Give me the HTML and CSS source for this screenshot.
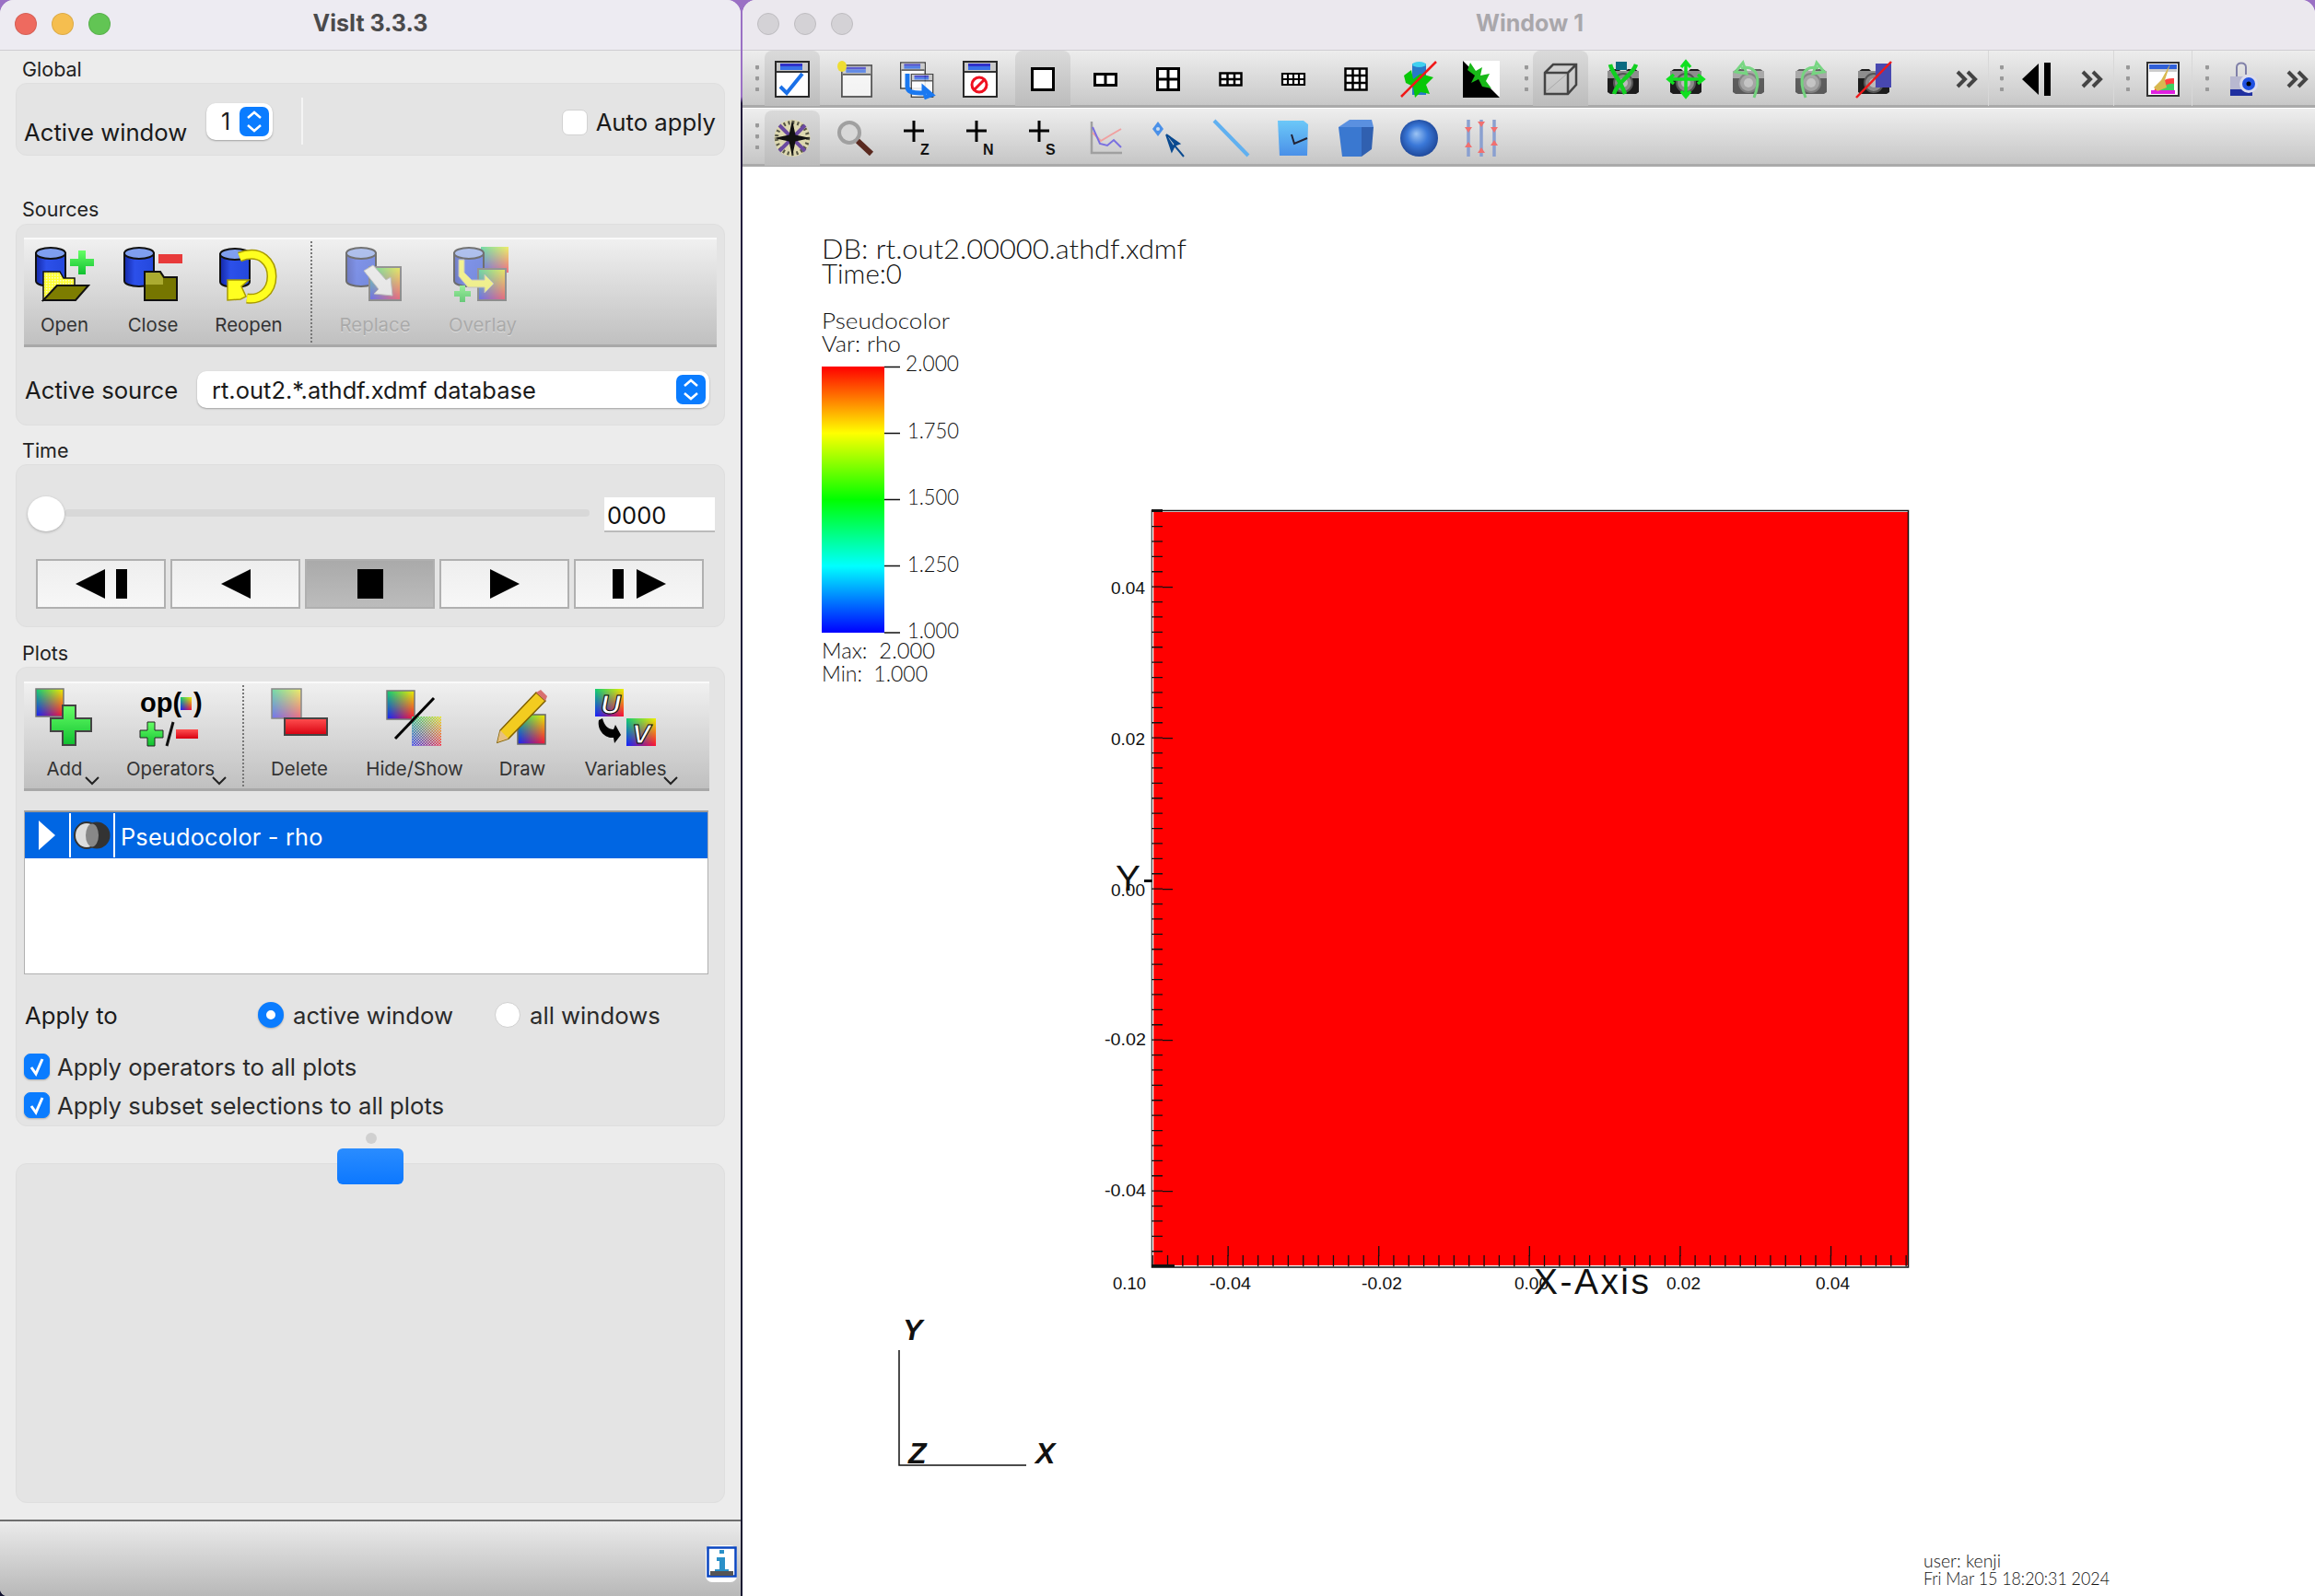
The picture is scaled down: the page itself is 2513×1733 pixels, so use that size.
FILE: index.html
```html
<!DOCTYPE html>
<html lang="en">
<head>
<meta charset="utf-8">
<title>VisIt 3.3.3</title>
<link rel="stylesheet" href="styles.css">
</head>
<body>
<svg class="defs" aria-hidden="true">
  <defs>
    <linearGradient id="cylg" x1="0" x2="1" y1="0" y2="0"><stop offset="0" stop-color="#1428a8"/><stop offset=".35" stop-color="#2c50ea"/><stop offset="1" stop-color="#2448dc"/></linearGradient>
    <linearGradient id="rbV1" x1="0" x2="0" y1="0" y2="1"><stop offset="0" stop-color="#10d070"/><stop offset="1" stop-color="#1420ff"/></linearGradient>
    <linearGradient id="rbV2" x1="0" x2="0" y1="0" y2="1"><stop offset="0" stop-color="#f0f000"/><stop offset="1" stop-color="#ff1030"/></linearGradient>
    <linearGradient id="maskG" x1="0" x2="1" y1="0" y2="0"><stop offset="0" stop-color="#000"/><stop offset="1" stop-color="#fff"/></linearGradient>
    <mask id="hm" maskContentUnits="objectBoundingBox"><rect width="1" height="1" fill="url(#maskG)"/></mask>
    <linearGradient id="grn" x1="0" x2="0" y1="0" y2="1"><stop offset="0" stop-color="#66ff66"/><stop offset="1" stop-color="#10c030"/></linearGradient>
    <linearGradient id="redg" x1="0" x2="0" y1="0" y2="1"><stop offset="0" stop-color="#ff5050"/><stop offset="1" stop-color="#d80010"/></linearGradient>
    <linearGradient id="ramp" x1="0" x2="0" y1="0" y2="1"><stop offset="0" stop-color="#f00"/><stop offset=".25" stop-color="#ff0"/><stop offset=".5" stop-color="#0f0"/><stop offset=".75" stop-color="#0ff"/><stop offset="1" stop-color="#00f"/></linearGradient>
    <linearGradient id="planeg" x1="0" x2="0" y1="0" y2="1"><stop offset="0" stop-color="#6cc8f8"/><stop offset="1" stop-color="#4a90e8"/></linearGradient>
    <radialGradient id="sph" cx=".5" cy=".5" r=".6" fx=".42" fy=".38"><stop offset="0" stop-color="#9cc4f4"/><stop offset=".45" stop-color="#3a78d8"/><stop offset="1" stop-color="#173a88"/></radialGradient>
    <pattern id="ychk" width="3" height="3" patternUnits="userSpaceOnUse"><rect width="3" height="3" fill="#ffff30"/><rect width="1.5" height="1.5" fill="#f8f8d0"/></pattern>
    <pattern id="cchk" width="3" height="3" patternUnits="userSpaceOnUse"><rect width="1.5" height="1.5" fill="#cfcfcf"/><rect x="1.5" y="1.5" width="1.5" height="1.5" fill="#cfcfcf"/></pattern>
    <symbol id="rb" viewBox="0 0 10 10" preserveAspectRatio="none"><rect width="10" height="10" fill="url(#rbV1)"/><rect width="10" height="10" fill="url(#rbV2)" mask="url(#hm)"/></symbol>
    <symbol id="cyl" viewBox="0 0 34 44"><path d="M1 7v30c0 3.5 7 6 16 6s16-2.5 16-6V7z" fill="url(#cylg)" stroke="#111" stroke-width="2"/><ellipse cx="17" cy="7" rx="16" ry="6" fill="#7f9ff0" stroke="#111" stroke-width="2"/></symbol>
    <symbol id="win" viewBox="0 0 38 40"><rect x="1" y="1" width="36" height="38" fill="#fff" stroke="#2a2a2a" stroke-width="2"/><rect x="2" y="2" width="34" height="10" fill="#c8c8c8"/><rect x="6" y="3" width="24" height="3" fill="#3030c8"/><rect x="6" y="6" width="24" height="4" fill="#3a70e8"/><rect x="2" y="11" width="34" height="2" fill="#333"/></symbol>
    <symbol id="cam" viewBox="0 0 40 40"><path d="M3 12l4-3h8l2 2h6l2-2h8l4 3v22l-3 2H6l-3-2z" fill="#1c1c1c"/><rect x="3" y="11" width="34" height="8" fill="#8e8e8e"/><circle cx="20" cy="24" r="10" fill="#8a8a8a" stroke="#555" stroke-width="2"/><circle cx="20" cy="24" r="5" fill="#bbb"/></symbol>
    <symbol id="chev" viewBox="0 0 27 20"><path d="M3 2l8 8-8 8M14 2l8 8-8 8" fill="none" stroke="#444" stroke-width="4"/></symbol>
    <symbol id="down" viewBox="0 0 16 10"><path d="M1 1l7 7 7-7" fill="none" stroke="#222" stroke-width="2"/></symbol>
    <symbol id="updown" viewBox="0 0 32 32"><rect width="32" height="32" rx="7" fill="#0a7cff"/><path d="M9 12l7-6 7 6M9 20l7 6 7-6" fill="none" stroke="#fff" stroke-width="2.5"/></symbol>
  </defs>
</svg>

<div class="desktop">
  <section class="panel">
    <header class="titlebar main-title">
      <div class="lights"><i class="light red"></i><i class="light yellow"></i><i class="light green"></i></div>
      <span class="title-text">VisIt 3.3.3</span>
    </header>
    <div class="panel-body">
      <div class="sec first">Global</div>
      <div class="group group-global">
        <span class="lbl active-label">Active window</span>
        <span class="combo small"><span class="combo-val">1</span><svg class="updown"><use href="#updown"/></svg></span>
        <i class="vsep"></i>
        <label class="auto"><i class="check-box"></i><span class="lbl">Auto apply</span></label>
      </div>

      <div class="sec sources">Sources</div>
      <div class="group group-sources">
        <div class="iconbar">
          <div class="tool w88">
            <svg class="ti" width="64" height="60" viewBox="0 0 64 60"><use href="#cyl" width="34" height="44"/><path d="M9 27h18l4 7h12v8H24L9 58z" fill="url(#ychk)" stroke="#111" stroke-width="1.5"/><path d="M9 58l15-16h34L44 58z" fill="#7d7d00" stroke="#111" stroke-width="2"/><path d="M47 4h8v9h9v8h-9v9h-8v-9h-9v-8h9z" fill="url(#grn)"/></svg>
            <span class="tl">Open</span>
          </div>
          <div class="tool w104">
            <svg class="ti" width="64" height="60" viewBox="0 0 64 60"><use href="#cyl" width="34" height="44"/><path d="M23 58V27h17l4 6h14v25z" fill="#767600" stroke="#111" stroke-width="2"/><path d="M24 28h15l4 6v7H24z" fill="#abab30"/><rect x="38" y="8" width="26" height="10" fill="#e83a3a"/></svg>
            <span class="tl">Close</span>
          </div>
          <div class="tool w104">
            <svg class="ti" width="64" height="60" viewBox="0 0 64 60"><use href="#cyl" y="1" width="34" height="44"/><path d="M22 11C46 2 57 18 57 32c0 17-13 26-27 24" fill="none" stroke="#a89a00" stroke-width="11"/><path d="M22 11C46 2 57 18 57 32c0 17-13 26-27 24" fill="none" stroke="#ffff20" stroke-width="8"/><path d="M9 36h23l-8 7 5 11-6 3-14 1z" fill="#ffff20" stroke="#a89a00" stroke-width="1.5"/></svg>
            <span class="tl">Reopen</span>
          </div>
          <i class="dots"></i>
          <div class="tool w138 off">
            <svg class="ti" width="64" height="60" viewBox="0 0 64 60"><use href="#cyl" width="34" height="44"/><use href="#rb" x="26" y="22" width="34" height="36"/><rect x="26" y="22" width="34" height="36" fill="none" stroke="#555" stroke-width="2"/><path d="M20 26l10-6 14 16 5-3 2 20-20-2 5-5z" fill="#f2f2f2" stroke="#aaa"/></svg>
            <span class="tl">Replace</span>
          </div>
          <div class="tool w96 off">
            <svg class="ti" width="64" height="60" viewBox="0 0 64 60"><use href="#rb" x="30" y="0" width="30" height="28"/><use href="#cyl" width="34" height="44"/><use href="#rb" x="27" y="24" width="30" height="34"/><rect x="27" y="24" width="30" height="34" fill="none" stroke="#555" stroke-width="2"/><path d="M12 14v14l8 8h14v-6l10 10-10 10v-6H16L6 32V14z" fill="#ffff50" stroke="#aaa"/><path d="M7 42h6v6h6v6h-6v6H7v-6H1v-6h6z" fill="url(#grn)"/></svg>
            <span class="tl">Overlay</span>
          </div>
        </div>
        <div class="source-row">
          <span class="lbl source-label">Active source</span>
          <span class="combo wide"><span class="combo-text">rt.out2.*.athdf.xdmf database</span><svg class="updown"><use href="#updown"/></svg></span>
        </div>
      </div>

      <div class="sec later">Time</div>
      <div class="group group-time">
        <div class="slider-row">
          <div class="slider"><i class="track"></i><i class="knob"></i></div>
          <span class="num-input">0000</span>
        </div>
        <div class="transport">
          <button class="tbtn"><svg width="56" height="32" viewBox="0 0 56 32"><path d="M32 0v32L0 16z M44 0h12v32H44z"/></svg></button>
          <button class="tbtn"><svg width="32" height="32" viewBox="0 0 32 32"><path d="M32 0v32L0 16z"/></svg></button>
          <button class="tbtn on"><svg width="28" height="32" viewBox="0 0 28 32"><path d="M0 0h28v32H0z"/></svg></button>
          <button class="tbtn"><svg width="32" height="32" viewBox="0 0 32 32"><path d="M0 0v32l32-16z"/></svg></button>
          <button class="tbtn"><svg width="58" height="32" viewBox="0 0 58 32"><path d="M0 0h12v32H0z M26 0v32l32-16z"/></svg></button>
        </div>
      </div>

      <div class="sec later plots-sec">Plots</div>
      <div class="group group-plots">
        <div class="iconbar plotsbar">
          <div class="tool w88">
            <svg class="ti" width="64" height="62" viewBox="0 0 64 62"><use href="#rb" x="1" width="30" height="30"/><rect x="1" y="0" width="30" height="30" fill="none" stroke="#777" stroke-width="1.5"/><path d="M30 18h14v14h17v14H44v15H30V46H17V32h13z" fill="url(#grn)" stroke="#444" stroke-width="2"/></svg>
            <span class="tl">Add</span>
            <svg class="drop"><use href="#down"/></svg>
          </div>
          <div class="tool w142">
            <svg class="ti" width="66" height="62" viewBox="0 0 66 62"><text class="op" x="0" y="25">op(</text><use href="#rb" x="44" y="9" width="12" height="14"/><text class="op" x="58" y="25">)</text><path d="M8 36h8v9h9v8h-9v9H8v-9H0v-8h8z" fill="url(#grn)" stroke="#222"/><path d="M36 36l-7 26" stroke="#111" stroke-width="3"/><rect x="39" y="44" width="24" height="10" fill="url(#redg)"/></svg>
            <span class="tl">Operators</span>
            <svg class="drop"><use href="#down"/></svg>
          </div>
          <i class="dots plot-dots"></i>
          <div class="tool w122">
            <svg class="ti" width="62" height="62" viewBox="0 0 62 62"><g opacity=".55"><use href="#rb" x="1" width="32" height="32"/></g><rect x="1" y="0" width="32" height="32" fill="none" stroke="#888" stroke-width="1.5"/><rect x="15" y="32" width="46" height="18" fill="url(#redg)" stroke="#444" stroke-width="2"/></svg>
            <span class="tl">Delete</span>
          </div>
          <div class="tool w128">
            <svg class="ti" width="62" height="62" viewBox="0 0 62 62"><use href="#rb" x="1" y="2" width="30" height="31"/><rect x="1" y="2" width="30" height="31" fill="none" stroke="#777" stroke-width="1.5"/><use href="#rb" x="28" y="30" width="32" height="32"/><rect x="28" y="30" width="32" height="32" fill="url(#cchk)"/><path d="M10 54L52 10" stroke="#000" stroke-width="3"/></svg>
            <span class="tl">Hide/Show</span>
          </div>
          <div class="tool w106">
            <svg class="ti" width="58" height="62" viewBox="0 0 58 62"><use href="#rb" x="24" y="28" width="30" height="32"/><rect x="24" y="28" width="30" height="32" fill="none" stroke="#666" stroke-width="1.5"/><path d="M2 58l3-13L44 4l10 9-40 41z" fill="#f2cc20" stroke="#806000" stroke-width="1.5"/><path d="M44 4l5-3 7 7-2 5z" fill="#d87070"/><path d="M2 58l3-13 9 9z" fill="#e6c080"/></svg>
            <span class="tl">Draw</span>
          </div>
          <div class="tool w118">
            <svg class="ti" width="66" height="62" viewBox="0 0 66 62"><use href="#rb" width="31" height="30"/><text class="uv" x="6" y="27">U</text><path d="M8 32c2 8 6 12 12 12l2-5 6 11-7 9-1-6C10 54 2 44 4 34z" fill="#000"/><use href="#rb" x="34" y="32" width="32" height="30"/><text class="uv" x="40" y="59">V</text></svg>
            <span class="tl">Variables</span>
            <svg class="drop"><use href="#down"/></svg>
          </div>
        </div>
        <div class="plot-list">
          <div class="plot-row">
            <span class="cell arrow-cell"><svg width="18" height="32" viewBox="0 0 18 32"><path d="M0 0l18 16L0 32z" fill="#fff"/></svg></span>
            <span class="cell eye-cell"><svg width="40" height="30" viewBox="0 0 40 30"><ellipse cx="25" cy="15" rx="14.500" ry="14.500" fill="#333"/><ellipse cx="14" cy="15" rx="13" ry="14" fill="#ddd" stroke="#333" stroke-width="2"/><ellipse cx="20" cy="15" rx="7" ry="12.500" fill="#888"/></svg></span>
            <span class="plot-name">Pseudocolor - rho</span>
          </div>
        </div>
        <div class="apply-row">
          <span class="lbl apply-label">Apply to</span>
          <label class="radio-item"><i class="radio sel"></i><span class="lbl dim">active window</span></label>
          <label class="radio-item"><i class="radio"></i><span class="lbl dim">all windows</span></label>
        </div>
        <label class="check-row one"><i class="check-box sel"><svg width="18" height="22" viewBox="0 0 18 22"><path d="M3 12l5 7 7-16" fill="none" stroke="#fff" stroke-width="3"/></svg></i><span class="lbl dim">Apply operators to all plots</span></label>
        <label class="check-row two"><i class="check-box sel"><svg width="18" height="22" viewBox="0 0 18 22"><path d="M3 12l5 7 7-16" fill="none" stroke="#fff" stroke-width="3"/></svg></i><span class="lbl dim">Apply subset selections to all plots</span></label>
      </div>

      <div class="splitter"><i class="split-dot"></i></div>
      <div class="group group-lower"></div>
      <i class="blue-tab"></i>
    </div>
    <footer class="statusbar">
      <svg class="info" width="34" height="40" viewBox="0 0 34 40"><rect width="34" height="40" rx="7" fill="#fff"/><rect x="2.5" y="2.5" width="30" height="31" fill="#fff" stroke="#0a45c0" stroke-width="2.5"/><path d="M15 5h5v4h-5zM12 13h9v13h4v4H10v-4h5v-9h-3z" fill="#2a90c8"/><rect x="5" y="28" width="25" height="5" fill="#555"/></svg>
    </footer>
  </section>

  <section class="viswin">
    <header class="titlebar vis-title">
      <div class="lights"><i class="light gray"></i><i class="light gray"></i><i class="light gray"></i></div>
      <span class="title-text faded">Window 1</span>
    </header>
    <div class="vtb bar-one">
      <i class="grip"></i>
      <div class="tools">
        <span class="vt on"><svg width="38" height="40"><use href="#win" width="38" height="40"/><path d="M6 28l7 7 17-21" fill="none" stroke="#1a70e8" stroke-width="4"/></svg></span>
        <span class="vt"><svg width="38" height="40" viewBox="0 0 38 40"><use href="#win" x="4" y="4" width="34" height="36" opacity=".75"/><ellipse cx="5" cy="6" rx="5" ry="6" fill="#eedd33"/></svg></span>
        <span class="vt"><svg width="38" height="40" viewBox="0 0 38 40"><use href="#win" width="28" height="32" opacity=".85"/><use href="#win" x="10" y="14" width="28" height="26" opacity=".85"/><path d="M8 14v14c0 6 6 7 14 7h4v-5l8 7-8 3v0" fill="none" stroke="#1a78f0" stroke-width="5"/></svg></span>
        <span class="vt"><svg width="38" height="40"><use href="#win" width="38" height="40"/><circle cx="18" cy="26" r="8" fill="none" stroke="#f01020" stroke-width="3"/><path d="M13 31l10-10" stroke="#f01020" stroke-width="3"/></svg></span>
        <span class="vt on"><svg width="26" height="26" viewBox="0 0 26 26"><rect x="1.5" y="1.5" width="23" height="23" fill="#fff" stroke="#000" stroke-width="3"/></svg></span>
        <span class="vt"><svg width="26" height="15" viewBox="0 0 26 15"><path d="M1.5 1.5h23v12h-23zM13 1.5v12" fill="#fff" stroke="#000" stroke-width="3"/></svg></span>
        <span class="vt"><svg width="26" height="26" viewBox="0 0 26 26"><path d="M1.5 1.5h23v23h-23zM13 1.5v23M1.5 13h23" fill="#fff" stroke="#000" stroke-width="3"/></svg></span>
        <span class="vt"><svg width="26" height="16" viewBox="0 0 26 16"><path d="M1.5 1.5h23v13h-23zM9.5 1.5v13M17 1.5v13M1.5 8h23" fill="#fff" stroke="#000" stroke-width="2.5"/></svg></span>
        <span class="vt"><svg width="26" height="14" viewBox="0 0 26 14"><path d="M1 1h24v12H1zM7 1v12M13 1v12M19 1v12M1 7h24" fill="#fff" stroke="#000" stroke-width="2.2"/></svg></span>
        <span class="vt"><svg width="26" height="26" viewBox="0 0 26 26"><path d="M1.5 1.5h23v23h-23zM9.5 1.5v23M17 1.5v23M1.5 9h23M1.5 17h23" fill="#fff" stroke="#000" stroke-width="2.5"/></svg></span>
        <span class="vt"><svg width="40" height="40" viewBox="0 0 40 40"><path d="M13 3h15v34H13z" fill="#2878c8"/><ellipse cx="20.500" cy="4" rx="7.500" ry="3" fill="#40d0f0"/><path d="M4 16l8-6 2 10 8-6 14 4-8 8 4 10-10-2-6 6-2-12-8-4z" fill="#08c808"/><path d="M1 39L39 1" stroke="#f01818" stroke-width="2.5"/></svg></span>
        <span class="vt"><svg width="40" height="40" viewBox="0 0 40 40"><rect width="40" height="40" fill="#fff"/><path d="M0 40V0l40 40z" fill="#000"/><path d="M8 2l6 9 7-4-2 9 10-2-4 8 6 8-10-2-4-8-8 4 4-8-8-6z" fill="#18b818"/></svg></span>
      </div>
      <i class="grip g2"></i>
      <div class="tools second">
        <span class="vt on"><svg width="36" height="34" viewBox="0 0 36 34"><path d="M1 10L10 1h25v22l-9 10H1z M1 10h25v23 M26 10l9-9" fill="none" stroke="#444" stroke-width="2.5"/><path d="M3 30L24 12" stroke="#aaa"/></svg></span>
        <span class="vt"><svg width="40" height="40"><use href="#cam" width="40" height="40"/><rect x="12" y="1" width="12" height="9" fill="#0a6a80"/><path d="M6 4c2 10 10 14 16 32M34 4C30 16 14 22 10 36" fill="none" stroke="#10d020" stroke-width="4.500"/></svg></span>
        <span class="vt"><svg width="40" height="40"><use href="#cam" width="40" height="40"/><path d="M20 2v36M2 20h36M15 7l5-6 5 6M15 33l5 6 5-6M7 15l-6 5 6 5M33 15l6 5-6 5" fill="none" stroke="#10e020" stroke-width="3.500"/></svg></span>
        <span class="vt"><svg class="pale" width="40" height="40"><use href="#cam" width="40" height="40"/><path d="M12 8c18-4 22 12 14 32M6 12l8-10 4 12z" fill="#40d050" stroke="#40d050" stroke-width="3" fill-opacity="0"/></svg></span>
        <span class="vt"><svg class="pale" width="40" height="40"><use href="#cam" width="40" height="40"/><path d="M28 8C10 4 6 20 14 40M34 12L26 2l-4 12z" fill="#40d050" stroke="#40d050" stroke-width="3" fill-opacity="0"/></svg></span>
        <span class="vt"><svg width="40" height="40"><use href="#cam" width="40" height="40"/><rect x="22" y="3" width="17" height="26" fill="#4848b0"/><path d="M1 40L39 1" stroke="#f01818" stroke-width="2.5"/></svg></span>
      </div>
      <svg class="more m1" width="27" height="20"><use href="#chev"/></svg>
      <i class="vline"></i>
      <i class="grip g3"></i>
      <svg class="lone l1" width="32" height="38" viewBox="0 0 32 38"><path d="M18 2v34L0 19zM24 1h7v36h-7z"/></svg>
      <svg class="more m2" width="27" height="20"><use href="#chev"/></svg>
      <i class="vline"></i>
      <i class="grip g4"></i>
      <svg class="lone l2" width="36" height="38" viewBox="0 0 36 38"><rect x="1" y="1" width="34" height="36" fill="#fff" stroke="#333" stroke-width="2"/><rect x="3" y="3" width="30" height="5" fill="#3060d8"/><rect x="3" y="8" width="30" height="3" fill="#ccc"/><path d="M8 32a22 22 0 0 1 22-14v14z" fill="#ff4040"/><path d="M14 32a16 16 0 0 1 16-8v8z" fill="#40d060"/><rect x="5" y="31" width="26" height="4" fill="#e020e0"/><path d="M26 2L16 20l-8 8 4 4 10-4-2-8z" fill="#d8b850"/></svg>
      <i class="vline v3"></i>
      <i class="grip g5"></i>
      <svg class="lone l3" width="34" height="38" viewBox="0 0 34 38"><path d="M8 18V6c0-6 10-6 10 0v8" fill="none" stroke="#8080a8" stroke-width="2"/><rect x="1" y="16" width="24" height="21" fill="#b8b8d0"/><rect x="1" y="30" width="24" height="7" fill="#2030a0"/><circle cx="21" cy="24" r="10" fill="#dde"/><circle cx="21" cy="24" r="7" fill="#2050e0"/><circle cx="21" cy="24" r="2.5" fill="#000"/></svg>
      <svg class="more m3" width="27" height="20"><use href="#chev"/></svg>
    </div>
    <div class="vtb bar-two">
      <i class="grip"></i>
      <div class="tools">
        <span class="vt on"><svg width="40" height="40" viewBox="0 0 40 40"><ellipse cx="20" cy="20" rx="19.500" ry="20" fill="#ddd8b0"/><circle cx="20" cy="20" r="17" fill="none" stroke="#554" stroke-width="4" stroke-dasharray="2 3"/><path d="M6 6l12 12M34 6L22 18M6 34l12-12M34 34L22 22" stroke="#6a4aa0" stroke-width="4"/><path d="M20 0l3.500 16.500L40 20l-16.500 3.500L20 40l-3.500-16.500L0 20l16.500-3.500z" fill="#111"/></svg></span>
        <span class="vt"><svg width="41" height="40" viewBox="0 0 41 40"><circle cx="14" cy="14" r="11" fill="#d8d8d8" stroke="#a0a0a0" stroke-width="4"/><path d="M23 23l15 14" stroke="#5a2a20" stroke-width="6"/></svg></span>
        <span class="vt"><svg class="txt-ico" width="31" height="40" viewBox="0 0 31 40"><path d="M0 12h22M11 1v23" stroke="#000" stroke-width="3"/><text x="18" y="38">Z</text></svg></span>
        <span class="vt"><svg class="txt-ico" width="31" height="40" viewBox="0 0 31 40"><path d="M0 12h22M11 1v23" stroke="#000" stroke-width="3"/><text x="18" y="38">N</text></svg></span>
        <span class="vt"><svg class="txt-ico" width="31" height="40" viewBox="0 0 31 40"><path d="M0 12h22M11 1v23" stroke="#000" stroke-width="3"/><text x="18" y="38">S</text></svg></span>
        <span class="vt"><svg width="35" height="36" viewBox="0 0 35 36"><path d="M2 0v34h33" fill="none" stroke="#a0a0a0" stroke-width="2.5"/><path d="M3 12l9 9 10-6 12-7" fill="none" stroke="#f0a0a0" stroke-width="2"/><path d="M3 6l8 18 8 2 7-6 8 8" fill="none" stroke="#7a70e0" stroke-width="2"/></svg></span>
        <span class="vt"><svg width="38" height="40" viewBox="0 0 38 40"><path d="M8 2l6 8-6 8-6-8z" fill="#4a90e8"/><circle cx="8" cy="10" r="2" fill="#cde"/><path d="M17 16l6 18 3-6 10 12M17 16l14 10-6 2" fill="#0a4a90" stroke="#0a4a90" stroke-width="2"/></svg></span>
        <span class="vt"><svg width="41" height="40" viewBox="0 0 41 40"><path d="M2 1l37 38" stroke="#60b0f0" stroke-width="4"/></svg></span>
        <span class="vt"><svg width="36" height="40" viewBox="0 0 36 40"><path d="M1 1h28l5 4-1 34H3z" fill="url(#planeg)"/><path d="M16 16l3 10 14-6" fill="none" stroke="#223" stroke-width="2"/></svg></span>
        <span class="vt"><svg width="38" height="40" viewBox="0 0 38 40"><path d="M0 8l12-8h24l2 8z" fill="#5a90e0"/><path d="M0 8h25v32H4z" fill="#3a78d0"/><path d="M25 8h13l-2 24-11 8z" fill="#3060b0"/></svg></span>
        <span class="vt"><svg width="41" height="40" viewBox="0 0 41 40"><ellipse cx="20.500" cy="20" rx="20.500" ry="20" fill="url(#sph)"/></svg></span>
        <span class="vt"><svg width="38" height="40" viewBox="0 0 38 40"><path d="M5 0v40M19 0v40M33 0v40" stroke="#8aa0d0" stroke-width="3.500"/><path d="M1 8h8l-4 6zM15 2h8l-4 6zM29 8h8l-4 6zM1 30h8l-4-6zM15 36h8l-4-6zM29 28h8l-4-6z" fill="#f07070"/></svg></span>
      </div>
    </div>
    <div class="canvas">
      <svg class="plot" viewBox="806 181 1707 1552" width="1707" height="1552">
        <g class="ann">
          <text x="892" y="281" textLength="396" lengthAdjust="spacingAndGlyphs" class="t-lg">DB: rt.out2.00000.athdf.xdmf</text>
          <text x="892" y="308" textLength="87" lengthAdjust="spacingAndGlyphs" class="t-lg">Time:0</text>
          <text x="892" y="357" textLength="139" lengthAdjust="spacingAndGlyphs" class="t-md">Pseudocolor</text>
          <text x="892" y="382" textLength="86" lengthAdjust="spacingAndGlyphs" class="t-md">Var: rho</text>
          <text x="983" y="403" textLength="58" lengthAdjust="spacingAndGlyphs" class="t-md">2.000</text>
          <text x="985" y="476" textLength="56" lengthAdjust="spacingAndGlyphs" class="t-md">1.750</text>
          <text x="985" y="548" textLength="56" lengthAdjust="spacingAndGlyphs" class="t-md">1.500</text>
          <text x="985" y="621" textLength="56" lengthAdjust="spacingAndGlyphs" class="t-md">1.250</text>
          <text x="985" y="693" textLength="56" lengthAdjust="spacingAndGlyphs" class="t-md">1.000</text>
          <text x="892" y="715" textLength="123" lengthAdjust="spacingAndGlyphs" class="t-md">Max:  2.000</text>
          <text x="892" y="740" textLength="115" lengthAdjust="spacingAndGlyphs" class="t-md">Min:  1.000</text>
          <text x="2088" y="1702" textLength="84" lengthAdjust="spacingAndGlyphs" class="t-sm">user: kenji</text>
          <text x="2088" y="1721" textLength="202" lengthAdjust="spacingAndGlyphs" class="t-sm">Fri Mar 15 18:20:31 2024</text>
        </g>
        <rect x="892" y="398" width="68" height="289" fill="url(#ramp)"/>
        <path d="M960 398.500h17M960 470.500h17M960 542.500h17M960 614.500h17M960 687h17" stroke="#111" stroke-width="1.500"/>
        <rect x="1252" y="556" width="819" height="818" fill="#f00"/>
        <path d="M1250.500 554v822h821V554.500h-821" fill="none" stroke="#111" stroke-width="1.500"/>
        <path d="M1251.500 556v818" stroke="#fff" stroke-width="1.500"/>
        <line x1="1256" x2="1256" y1="554.500" y2="1376" stroke="#111" stroke-width="12" stroke-dasharray="1.300 15.100"/>
        <line x1="1267.500" x2="1267.500" y1="637" y2="1300" stroke="#111" stroke-width="11" stroke-dasharray="1.300 162.700"/>
        <line x1="1250.500" x2="2071" y1="1369" y2="1369" stroke="#111" stroke-width="12" stroke-dasharray="1.300 15.060"/>
        <line x1="1250.500" x2="2071" y1="1358.500" y2="1358.500" stroke="#111" stroke-width="11" stroke-dasharray="1.300 162.300" stroke-dashoffset="-82"/>
        <rect x="1250" y="553" width="12" height="3" fill="#111"/>
        <rect x="1250" y="1373" width="25" height="3" fill="#111"/>
        <g class="tick">
          <text x="1206" y="645" textLength="37" lengthAdjust="spacingAndGlyphs">0.04</text>
          <text x="1206" y="809" textLength="37" lengthAdjust="spacingAndGlyphs">0.02</text>
          <text x="1206" y="973" textLength="37" lengthAdjust="spacingAndGlyphs">0.00</text>
          <text x="1199" y="1135" textLength="45" lengthAdjust="spacingAndGlyphs">-0.02</text>
          <text x="1199" y="1299" textLength="45" lengthAdjust="spacingAndGlyphs">-0.04</text>
          <text x="1208" y="1400" textLength="36" lengthAdjust="spacingAndGlyphs">0.10</text>
          <text x="1313" y="1400" textLength="45" lengthAdjust="spacingAndGlyphs">-0.04</text>
          <text x="1478" y="1400" textLength="44" lengthAdjust="spacingAndGlyphs">-0.02</text>
          <text x="1644" y="1400" textLength="37" lengthAdjust="spacingAndGlyphs">0.00</text>
          <text x="1809" y="1400" textLength="37" lengthAdjust="spacingAndGlyphs">0.02</text>
          <text x="1971" y="1400" textLength="37" lengthAdjust="spacingAndGlyphs">0.04</text>
        </g>
        <text class="axis" x="1665" y="1405" textLength="125" lengthAdjust="spacing">X-Axis</text>
        <text class="axis" x="1211" y="967" textLength="27" lengthAdjust="spacingAndGlyphs">Y</text>
        <rect x="1242" y="955" width="9" height="3" fill="#111"/>
        <path d="M976 1466v125h138" fill="none" stroke="#111" stroke-width="1.500"/>
        <text class="triad" x="980" y="1455">Y</text>
        <text class="triad" x="986" y="1589">Z</text>
        <text class="triad" x="1124" y="1589">X</text>
      </svg>
    </div>
  </section>
</div>
</body>
</html>
```

FILE: styles.css
```css
* { box-sizing: border-box; }
html, body { margin: 0; padding: 0; width: 2513px; height: 1733px; overflow: hidden; }
body {
  background: linear-gradient(#9a70c4 0, #9a70c4 105px, #221a3c 112px, #141430 100%);
  font-family: "Inter", "Liberation Sans", sans-serif;
  color: #1c1c1c;
}
i { display: block; font-style: normal; }
.defs { position: absolute; width: 0; height: 0; }
.desktop { display: flex; width: 2513px; height: 1733px; }

.panel {
  width: 804px; height: 1733px; background: #ececec; border-radius: 15px 15px 0 8px;
  display: flex; flex-direction: column; overflow: hidden; flex: none;
}
.viswin {
  margin-left: 2px; width: 1707px; height: 1733px; background: #fff; border-radius: 15px 15px 0 0;
  display: flex; flex-direction: column; overflow: hidden; flex: none;
}
.titlebar {
  height: 55px; flex: none; position: relative; display: flex; align-items: center; justify-content: center;
  border-bottom: 1px solid #cfcdd2;
}
.main-title { background: #edebf2; }
.vis-title { background: #ebe8ee; }
.lights { position: absolute; left: 16px; top: 14px; display: flex; gap: 16px; }
.light { width: 24px; height: 24px; border-radius: 50%; border: 1px solid rgba(0,0,0,.1); }
.red { background: #ee6a5f; }
.yellow { background: #f5be4f; }
.green { background: #62c554; }
.gray { background: #d4d2d6; border-color: #bdbbbf; }
.title-text { font-size: 25px; font-weight: 700; color: #4a4a4c; font-family: "Inter", sans-serif; position: relative; top: -2px; }
.title-text.faded { color: #a9a7ab; left: 1px; }

.panel-body { flex: 1; padding: 0 17px; position: relative; }
.sec { height: 26px; line-height: 26px; margin-bottom: 2px; font-size: 21.5px; color: #222; padding-left: 7px; }
.sec.first { margin-top: 7px; }
.sec.sources { margin-top: 45px; margin-bottom: 3px; }
.sec.later { margin-top: 14px; }
.sec.plots-sec { margin-top: 15px; }
.group { background: #e4e4e4; border: 1px solid #dedede; border-radius: 12px; }
.lbl { font-size: 25.7px; color: #1a1a1a; white-space: nowrap; }
.lbl.dim { color: #2a2a2a; }

.group-global { height: 79px; display: flex; align-items: center; padding: 4px 9px 0 8px; }
.active-label { width: 198px; margin-top: 24px; flex: none; }
.combo { background: #fff; border-radius: 10px; box-shadow: 0 1px 2px rgba(0,0,0,.3); display: flex; align-items: center; height: 40px; flex: none; }
.combo.small { width: 72px; padding: 0 4px 0 16px; justify-content: space-between; }
.combo-val { font-size: 25px; }
.updown { width: 32px; height: 32px; flex: none; }
.vsep { width: 2px; height: 51px; background: #f4f4f4; margin-left: 31px; }
.auto { margin-left: auto; display: flex; align-items: center; gap: 9px; position: relative; top: 1px; }
.check-box { width: 28px; height: 28px; border-radius: 7px; background: #fff; border: 1px solid #d2d2d2; display: flex; align-items: center; justify-content: center; flex: none; }
.check-box.sel { background: #0a7cff; border-color: #0a7cff; box-shadow: 0 1px 2px rgba(0,0,0,.25); }

.group-sources { height: 219px; padding: 14px 8px 0; }
.iconbar {
  height: 119px; display: flex; position: relative;
  background: linear-gradient(#f0f0f0, #c0c0c0);
  border-top: 2px solid #fafafa; border-bottom: 3px solid #a8a8a8;
}
.tool { display: flex; flex-direction: column; align-items: center; padding-top: 8px; position: relative; flex: none; }
.tl { font-size: 20.400px; line-height: 24px; margin-top: 13px; color: #333; font-family: "Inter", sans-serif; }
.ti { display: block; overflow: visible; }
.off .ti { opacity: .55; }
.off .tl { color: #aaa; text-shadow: 0 1px 0 #ddd; }
.w88 { width: 88px; } .w96 { width: 96px; } .w104 { width: 104px; } .w106 { width: 106px; }
.w118 { width: 118px; } .w122 { width: 122px; } .w128 { width: 128px; } .w138 { width: 138px; } .w142 { width: 142px; }
.dots { width: 0; height: 110px; margin: 2px 0 0 15px; border-left: 2px dotted #777; flex: none; margin-right: -1px; }
.plot-dots { margin-left: 7px; }
.source-row { display: flex; align-items: center; margin-top: 26px; padding-left: 1px; }
.source-label { width: 187px; flex: none; }
.combo.wide { width: 556px; padding: 0 4px 0 16px; justify-content: space-between; }
.combo-text { font-size: 25.500px; color: #1a1a1a; }

.group-time { height: 177px; padding: 33px 10px 0 12px; }
.slider-row { display: flex; align-items: center; height: 40px; }
.slider { width: 610px; height: 38px; position: relative; flex: none; }
.track { position: absolute; left: 40px; right: 0; top: 14px; height: 8px; border-radius: 4px; background: #d8d8d8; }
.knob { position: absolute; left: 0; top: 0; width: 40px; height: 38px; border-radius: 50%; background: #fff; box-shadow: 0 1px 3px rgba(0,0,0,.25); }
.num-input { width: 120px; height: 38px; margin-left: 16px; background: #fff; border-bottom: 2px solid #bbb; font-size: 25.500px; line-height: 40px; padding-left: 3px; color: #111; margin-top: 2px; }
.transport { display: flex; gap: 5px; margin: 29px 0 0 9px; }
.tbtn { width: 141px; height: 54px; border: 2px solid #b0b0b0; background: linear-gradient(#eeeeee, #f7f7f7); padding: 0; display: flex; align-items: center; justify-content: center; }
.tbtn svg { display: block; }
.tbtn.on { background: linear-gradient(#aaaaaa, #bcbcbc); }

.group-plots { height: 499px; padding: 15px 8px 0; }
.plotsbar { width: 744px; }
.plotsbar .tool { padding-top: 6px; }
.op { font: 700 29px "Liberation Sans", sans-serif; fill: #000; }
.uv { font: italic 700 30px "Liberation Sans", sans-serif; fill: #fff; stroke: #000; stroke-width: 1; }
.drop { position: absolute; width: 16px; height: 10px; bottom: 3px; right: 2px; }
.plotsbar .w88 .drop { right: 6px; }
.plotsbar .w142 .drop { right: 10px; }
.plot-list { width: 743px; height: 178px; margin-top: 21px; background: #fff; border: 1px solid #b0b0b0; border-top: 2px solid #999; }
.plot-row { height: 50px; background: #0066e3; display: flex; align-items: center; color: #fff; }
.cell { display: flex; align-items: center; justify-content: center; height: 48px; flex: none; }
.arrow-cell { width: 50px; border-right: 2px solid #fff; }
.eye-cell { width: 48px; border-right: 2px solid #fff; }
.plot-name { font-size: 25.300px; padding-left: 6px; letter-spacing: .2px; position: relative; top: 1px; }
.apply-row { display: flex; align-items: center; height: 28px; margin-top: 30px; padding-left: 1px; }
.apply-label { width: 253px; flex: none; }
.radio-item { width: 257px; display: flex; align-items: center; gap: 10px; flex: none; }
.radio { width: 28px; height: 28px; border-radius: 50%; background: #fff; border: 1px solid #d0d0d0; flex: none; }
.radio.sel { background: #fff; border: 9px solid #0a7cff; box-shadow: 0 1px 2px rgba(0,0,0,.25); }
.check-row { display: flex; align-items: center; gap: 8px; height: 28px; }
.check-row.one { margin-top: 28px; }
.check-row.two { margin-top: 14px; }

.splitter { height: 40px; padding-top: 7px; }
.split-dot { width: 12px; height: 12px; border-radius: 50%; background: #d0d0d0; margin: 0 auto; position: relative; left: 1px; }
.group-lower { height: 369px; }
.blue-tab { position: absolute; left: 366px; top: 1192px; width: 72px; height: 39px; border-radius: 6px; background: linear-gradient(#2a8cff, #0c78ff); }
.statusbar { height: 83px; flex: none; margin-top: auto; border-top: 2px solid #6e6e6e; background: linear-gradient(#ebebeb, #b8b8b8); display: flex; justify-content: flex-end; padding: 26px 4px 0 0; }
.info { display: block; }

.vtb { display: flex; align-items: center; flex: none; position: relative; }
.bar-one { height: 62px; background: linear-gradient(#ededed, #c8c8c8); border-bottom: 3px solid #aaa; }
.bar-two { height: 63px; margin-top: 1px; background: linear-gradient(#eeeeee, #c6c6c6); border-bottom: 3px solid #aaa; }
.grip { width: 4px; height: 28px; margin-left: 14px; flex: none; background: radial-gradient(circle 2.5px at 2px 2px, #999 2px, transparent 3px) 0 0 / 4px 12px repeat-y; }
.tools { display: flex; gap: 8px; margin-left: 6px; align-items: center; }
.tools.second { margin-left: 5px; }
.vt { width: 60px; height: 60px; display: flex; align-items: center; justify-content: center; flex: none; border-radius: 8px 8px 0 0; padding-top: 3px; }
.bar-two .vt { margin-top: 4px; padding-top: 0; }
.vt.on { background: linear-gradient(#dadada, #bcbcbc); }
.vt svg { display: block; overflow: visible; }
.pale { opacity: .65; }
.txt-ico text { font: 700 16px "Liberation Sans", sans-serif; fill: #111; }
.g2 { margin-left: 17px; }
.more { flex: none; display: block; margin-top: 2px; }
.m1 { margin-left: 58px; }
.vline { width: 1px; height: 60px; background: #d8d8d8; margin-left: 9px; flex: none; }
.vline.v3 { margin-left: 13px; }
.g3 { margin-left: 12px; }
.lone { flex: none; display: block; margin-top: 2px; }
.l1 { margin-left: 20px; }
.m2 { margin-left: 31px; }
.g4 { margin-left: 13px; }
.l2 { margin-left: 18px; }
.g5 { margin-left: 14px; }
.l3 { margin-left: 22px; }
.m3 { margin-left: 27px; }

.canvas { flex: 1; background: #fff; }
.plot { display: block; }
.ann text { font-family: "Lato", "Liberation Sans", sans-serif; font-weight: 300; fill: #111; white-space: pre; }
.t-lg { font-size: 30px; }
.t-md { font-size: 24px; }
.t-sm { font-size: 19px; }
.tick text { font: 18px "Liberation Sans", sans-serif; fill: #111; }
.axis { font: 39px "Liberation Sans", sans-serif; fill: #111; }
.triad { font: italic 700 32px "Liberation Sans", sans-serif; fill: #111; }
```
